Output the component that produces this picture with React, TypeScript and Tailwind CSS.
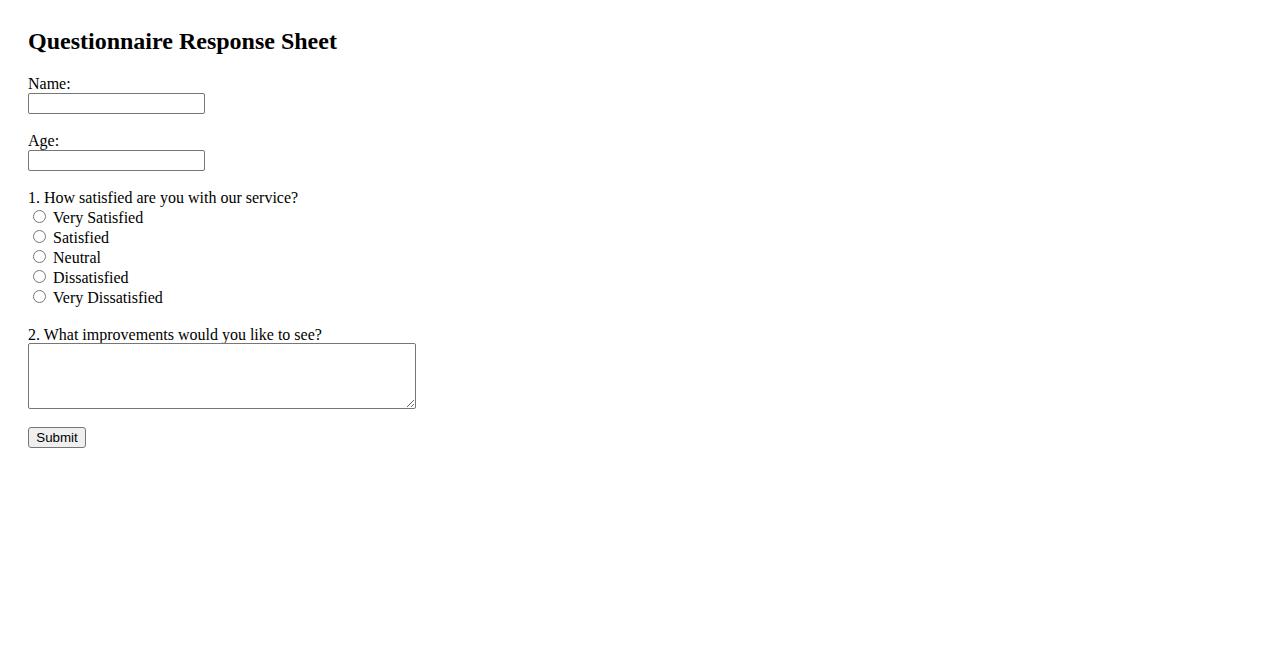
const options = ['Very Satisfied', 'Satisfied', 'Neutral', 'Dissatisfied', 'Very Dissatisfied'];

export default function App() {
  return (
    <div className="min-h-[650px] bg-white pt-[27px] pl-[28px] font-['Liberation_Serif',serif] text-[16px] text-black">
      <h2 className="mb-[20px] text-[24px] font-bold leading-[28px]">Questionnaire Response Sheet</h2>

      <form className="flex flex-col items-start" onSubmit={(e) => e.preventDefault()}>
        <label htmlFor="name" className="leading-[18px]">Name:</label>
        <input
          id="name"
          type="text"
          className="mb-[18px] h-[21px] w-[177px] rounded-[2px] border border-[#767676] bg-white px-[2px] font-['Liberation_Sans',sans-serif] text-[13.33px]"
        />

        <label htmlFor="age" className="leading-[18px]">Age:</label>
        <input
          id="age"
          type="text"
          className="mb-[18px] h-[21px] w-[177px] rounded-[2px] border border-[#767676] bg-white px-[2px] font-['Liberation_Sans',sans-serif] text-[13.33px]"
        />

        <p className="leading-[18px]">1. How satisfied are you with our service?</p>
        <div className="mb-[19px] flex flex-col">
          {options.map((opt) => (
            <label key={opt} className="flex h-[20px] items-start">
              <input type="radio" name="satisfaction" value={opt} className="ml-[5px] mr-[7px] mt-[3px] h-[13px] w-[13px]" />
              <span className="mt-[2px] leading-[18px]">{opt}</span>
            </label>
          ))}
        </div>

        <label htmlFor="improve" className="h-[17px] leading-[18px]">2. What improvements would you like to see?</label>
        <textarea
          id="improve"
          className="mb-[18px] h-[66px] w-[388px] rounded-[2px] border border-[#767676] bg-white p-[2px] font-['Liberation_Mono',monospace] text-[13.33px]"
        />

        <button
          type="submit"
          className="h-[21px] w-[58px] rounded-[3px] border border-[#767676] bg-[#efefef] font-['Liberation_Sans',sans-serif] text-[13.33px] leading-[15px]"
        >
          Submit
        </button>
      </form>
    </div>
  );
}
